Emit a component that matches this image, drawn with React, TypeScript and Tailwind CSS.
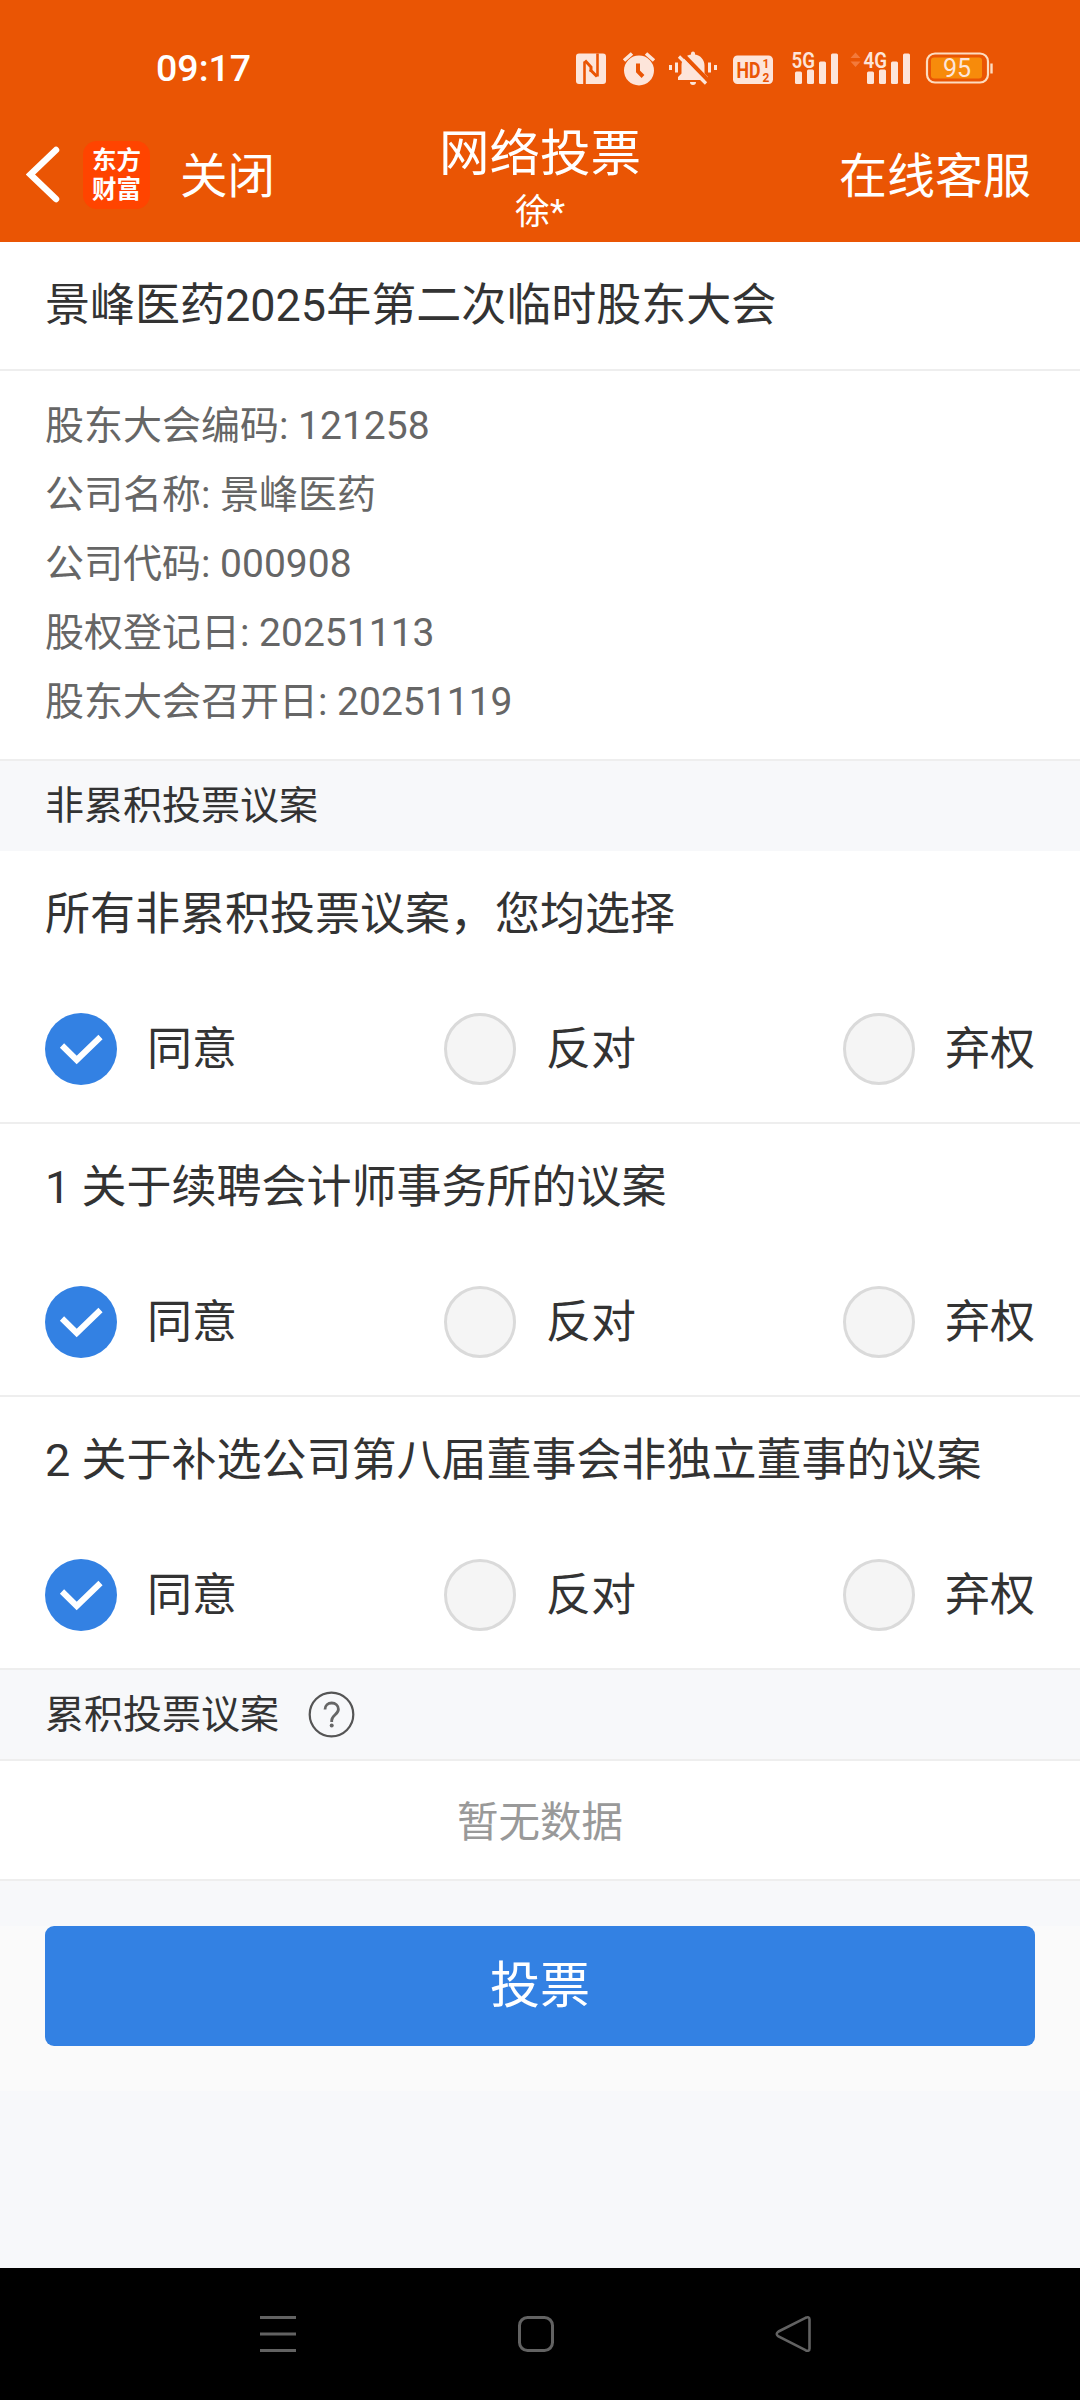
import React from "react";

const peach = "#FDE5DA";
const orange = "#EA5504";

const details = [
  "股东大会编码: 121258",
  "公司名称: 景峰医药",
  "公司代码: 000908",
  "股权登记日: 20251113",
  "股东大会召开日: 20251119",
];

const proposals = [
  "所有非累积投票议案，您均选择",
  "1 关于续聘会计师事务所的议案",
  "2 关于补选公司第八届董事会非独立董事的议案",
];

const choices = ["同意", "反对", "弃权"];

function StatusIcons() {
  return (
    <svg width="430" height="44" viewBox="570 47.5 430 44" fill={peach}>
      {/* NFC */}
      <rect x="576" y="54" width="30" height="30.500" rx="3" />
      <g fill="none" stroke={orange} strokeWidth="2.600">
        <path d="M584.500 85V62M597.500 54v23" />
        <path d="M585 61l6 6.500v5M597 77l-7-7" strokeWidth="3" />
      </g>
      {/* Alarm */}
      <circle cx="639" cy="71" r="15" />
      <path d="M624 61l8-7M654 61l-8-7" stroke={peach} strokeWidth="3.600" fill="none" />
      <path d="M638 64v8l5 5" stroke={orange} strokeWidth="4" fill="none" />
      {/* Muted bell */}
      <path d="M678 80.500v-3l3.500-3.500v-8c0-6 4-10 9.500-11v-1a2 2 0 0 1 4 0v1c5.500 1 9.500 5 9.500 11v8l3.500 3.500v3zM690 82.500h6a3 3 0 0 1-6 0z" />
      <path d="M682 54l29 30" stroke={orange} strokeWidth="4" />
      <path d="M679 57l27 27" stroke={peach} strokeWidth="3.200" />
      <path d="M670.500 65.500v5M676.500 63v10M709.500 63v10M715.500 65.500v5" stroke={peach} strokeWidth="3" />
      {/* HD badge */}
      <rect x="733" y="56" width="40" height="28.500" rx="4.500" />
      <g fontFamily="Roboto, sans-serif" fontWeight="700" fill={orange}>
        <text x="736.500" y="78" fontSize="22.500" textLength="24" lengthAdjust="spacingAndGlyphs">HD</text>
        <text x="762.500" y="68.500" fontSize="12">1</text>
        <text x="762.500" y="82" fontSize="12">2</text>
      </g>
      {/* Signal bars */}
      {[0, 72].map((dx) => (
        <g key={dx} transform={`translate(${dx} 0)`}>
          <rect x="795" y="72" width="7" height="12.500" rx="1.500" />
          <rect x="807" y="70" width="7" height="14.500" rx="1.500" />
          <rect x="819" y="62" width="7" height="22.500" rx="1.500" />
          <rect x="831" y="54" width="7" height="30.500" rx="1.500" />
          <text x="791.500" y="68" fontSize="22" fontFamily="Roboto, sans-serif" fontWeight="600" textLength="23.500" lengthAdjust="spacingAndGlyphs">
            {dx ? "4G" : "5G"}
          </text>
        </g>
      ))}
      <path d="M850.500 58.500l5-5.500 5 5.500zM850.500 62l5 5.500 5-5.500z" fill="#F37A3B" />
      {/* Battery */}
      <rect x="927" y="54" width="61" height="29" rx="8" fill="none" stroke="#FDDCC0" strokeWidth="2.200" />
      <rect x="931" y="58" width="51" height="21" rx="3" fill="#F78B0B" />
      <path d="M991.500 64v10" stroke="#FDDCC0" strokeWidth="2.400" />
      <text x="957" y="77" fontSize="25" textAnchor="middle" fontFamily="Roboto, sans-serif" fontWeight="400">95</text>
    </svg>
  );
}

function Header() {
  return (
    <header className="flex h-[242px] flex-col bg-[#EA5504] text-white">
      <div className="flex h-[120px] items-center justify-between pt-[17px] pr-[80px] pl-[156px]">
        <span className="text-[37.500px] leading-none font-medium">09:17</span>
        <StatusIcons />
      </div>
      <div className="grid h-[122px] grid-cols-3">
        <div className="flex items-start pt-[21px] pl-[26px]">
          <svg width="36" height="66" viewBox="0 0 36 66" fill="none" stroke="#fff" strokeWidth="6.500">
            <path d="M30 9L4.500 33.500L30 58" strokeLinecap="round" />
          </svg>
          <div className="ml-[21px] flex h-[68px] w-[67px] flex-col items-center justify-center rounded-[14px] bg-[#FF4400] text-[24.500px] leading-[29px] font-bold">
            <span>东方</span>
            <span>财富</span>
          </div>
          <span className="ml-[30px] text-[47.500px] leading-[72px]">关闭</span>
        </div>
        <div className="flex flex-col items-center pt-[5px]">
          <span className="text-[50.500px] leading-[58px]">网络投票</span>
          <span className="text-[35px] leading-[59px]">徐*</span>
        </div>
        <span className="pt-[21px] pr-[49px] text-right text-[48px] leading-[72px]">在线客服</span>
      </div>
    </header>
  );
}

function Radio({ checked }: { checked: boolean }) {
  if (!checked) {
    return <span className="size-[72px] rounded-full border-[3px] border-[#DADADA] bg-[#F5F5F5]" />;
  }
  return (
    <span className="flex size-[72px] items-center justify-center rounded-full bg-[#3381E3]">
      <svg width="72" height="72" viewBox="0 0 72 72" fill="none" stroke="#fff" strokeWidth="6">
        <path d="M17 32.500L31.700 47L55.500 24" />
      </svg>
    </span>
  );
}

function Proposal({ title }: { title: string }) {
  return (
    <section className="h-[273px] border-b-2 border-[#EEEEEE] bg-white px-[45px] pt-[31px]">
      <h2 className="text-[45px] leading-[66px]">{title}</h2>
      <div className="mt-[65px] flex justify-between">
        {choices.map((choice, i) => (
          <label key={choice} className="flex h-[72px] items-center gap-[30px]">
            <Radio checked={i === 0} />
            <span className="pt-[2px] text-[45px] leading-[72px]">{choice}</span>
          </label>
        ))}
      </div>
    </section>
  );
}

export default function App() {
  return (
    <div className="flex h-[2400px] w-[1080px] flex-col overflow-hidden bg-[#F7F8FA] font-[Roboto,'Noto_Sans_CJK_SC',sans-serif] text-[#333333]">
      <Header />
      <h1 className="h-[129px] border-b-2 border-[#EEEEEE] bg-white px-[45px] text-[45px] leading-[128px]">
        景峰医药2025年第二次临时股东大会
      </h1>
      <div className="h-[390px] border-b-2 border-[#EEEEEE] bg-white px-[45px] pt-[21px] text-[39px] leading-[69px] text-[#666666]">
        {details.map((line) => (
          <p key={line}>{line}</p>
        ))}
      </div>
      <div className="h-[90px] px-[45px] text-[39px] leading-[91px]">非累积投票议案</div>
      {proposals.map((title) => (
        <Proposal key={title} title={title} />
      ))}
      <div className="flex h-[91px] items-center border-b-2 border-[#EEEEEE] px-[45px] text-[39px]">
        <span className="pt-[2px]">累积投票议案</span>
        <svg className="ml-[29px]" width="47" height="47" viewBox="0 0 47 47" fill="none" stroke="#555" strokeWidth="2.200">
          <circle cx="23.500" cy="23.500" r="21.800" />
          <path d="M17 18.500c0-4 3-6.500 6.700-6.500s6.700 2.500 6.700 6.200c0 5.300-6.700 5.800-6.700 11.300v1.500" strokeWidth="2.800" stroke="#666" />
          <circle cx="23.700" cy="34.500" r="2" fill="#666" stroke="none" />
        </svg>
      </div>
      <div className="h-[120px] border-b-2 border-[#EEEEEE] bg-white text-center text-[41.500px] leading-[123px] text-[#999999]">
        暂无数据
      </div>
      <div className="mt-[45px] h-[165px] bg-[#FAFAFA] px-[45px]">
        <button className="h-[120px] w-full rounded-[9px] bg-[#3381E3] text-[50px] leading-[116px] text-white">投票</button>
      </div>
      <nav className="mt-auto h-[132px] bg-black">
        <svg width="1080" height="132" viewBox="0 0 1080 132" fill="none" stroke="#626262" strokeWidth="3">
          <path d="M260 49.500h36M260 66h36M260 82.500h36" />
          <rect x="519.500" y="49.500" width="33" height="33" rx="8" />
          <path d="M778.500 63.500L805.500 49.800Q809.500 48 809.500 51.500V80.500Q809.500 84 805.500 82.200L778.500 68.500Q775 66 778.500 63.500Z" strokeWidth="2.600" />
        </svg>
      </nav>
    </div>
  );
}
